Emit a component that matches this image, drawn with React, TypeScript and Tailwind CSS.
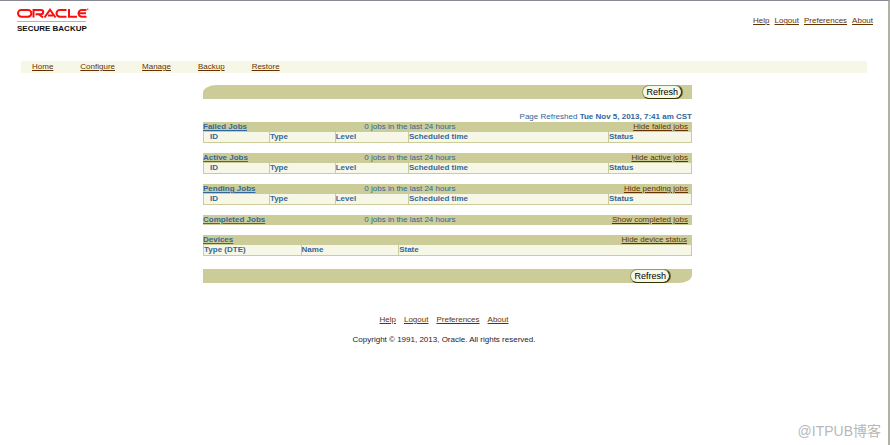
import type { ReactNode } from 'react';

const links = ['Help', 'Logout', 'Preferences', 'About'];
const menu = ['Home', 'Configure', 'Manage', 'Backup', 'Restore'];

type Job = { title: string; action: string; open: boolean };

const jobs: Job[] = [
  { title: 'Failed Jobs', action: 'Hide failed jobs', open: true },
  { title: 'Active Jobs', action: 'Hide active jobs', open: true },
  { title: 'Pending Jobs', action: 'Hide pending jobs', open: true },
  { title: 'Completed Jobs', action: 'Show completed jobs', open: false },
];

const jobColumns = [
  { name: 'ID', style: 'w-[13.5%] pl-1.5' },
  { name: 'Type', style: 'w-[13.5%]' },
  { name: 'Level', style: 'w-[15%]' },
  { name: 'Scheduled time', style: 'w-[41%]' },
  { name: 'Status', style: 'w-[17%]' },
];

const deviceColumns = [
  { name: 'Type (DTE)', style: 'w-[20%]' },
  { name: 'Name', style: 'w-[20%]' },
  { name: 'State', style: 'w-[60%]' },
];

const Logo = () => (
  <svg width="74" height="26" viewBox="0 0 74 26" role="img" aria-label="Oracle Secure Backup">
    <g fill="none" stroke="#fa0f0f" strokeWidth="2">
      <rect x="1" y="1.9" width="13.4" height="6.8" rx="3.4" />
      <path d="M16.5 9.5V1.9h7.5a2.2 2.2 0 0 1 0 4.4h-5.5M21.5 6l4.5 3.5" />
      <path d="M27.5 9.5l5.5-7.8 5.5 7.8M31 7.4h5" />
      <path d="M49.5 1.9h-6.6a3.4 3.4 0 0 0 0 6.8h6.6" />
      <path d="M52 1v7.7h8" />
      <path d="M69.5 1.9h-4.6a3.4 3.4 0 0 0 0 6.8h4.6M62.5 5.3h6.5" />
    </g>
    <circle cx="70.8" cy="1.2" r="0.7" fill="#fa0f0f" />
    <path d="M0 13.5h69" stroke="#b5b5b5" />
    <text x="0" y="23" fontSize="8" fontWeight="bold" fill="#111">SECURE BACKUP</text>
  </svg>
);

const Links = () => (
  <>
    {links.map((name) => (
      <a key={name} href="#" className="text-[#663300] underline">{name}</a>
    ))}
  </>
);

const RefreshButton = () => (
  <button
    type="button"
    className="h-3.5 rounded-full border border-[#999966] border-r-[#333300] border-b-[#333300] bg-[#f7f7e7] px-[3px] text-[9px] leading-none text-black shadow-[1px_0_0_#666633]"
  >
    Refresh
  </button>
);

const Bar = ({ title, note, children }: { title: string; note?: string; children: ReactNode }) => (
  <div className="flex h-[10px] items-center bg-[#cccc99]">
    <h2 className="w-[33%] font-bold">
      <a href="#" className="text-[#336699] underline">{title}</a>
    </h2>
    <span className="flex-1">{note}</span>
    {children}
  </div>
);

const Columns = ({ columns }: { columns: { name: string; style: string }[] }) => (
  <table className="w-full table-fixed border-collapse border border-t-0 border-[#cccc99] bg-[#f7f7e7]">
    <thead>
      <tr>
        {columns.map((column) => (
          <th key={column.name} className={`border-l border-[#cccc99] p-0 text-left font-bold ${column.style}`}>
            {column.name}
          </th>
        ))}
      </tr>
    </thead>
  </table>
);

export default function App() {
  return (
    <div className="relative min-h-screen border-t border-r-2 border-t-[#888a93] border-r-[#b0b2a4] bg-white font-['Liberation_Sans',Arial,sans-serif] text-[8px] leading-[10px] text-[#336699]">
      <header className="flex items-start justify-between pt-[7px] pr-[15px] pl-[17px]">
        <Logo />
        <div className="flex gap-[5px] pt-2">
          <Links />
        </div>
      </header>

      <nav className="mt-[27px] mr-[21px] ml-[21px] flex h-3 items-center gap-[27px] bg-[#f7f7e7] pl-[11px]">
        {menu.map((name) => (
          <a key={name} href="#" className="text-[#663300] underline">{name}</a>
        ))}
      </nav>

      <div className="pl-[7px]">
        <main className="mx-auto mt-3 w-[55.5%]">
          <div className="flex h-3.5 items-center justify-end rounded-tl-[14px_8px] bg-[#cccc99] pr-2.5">
            <RefreshButton />
          </div>

          <p className="mt-[13px] text-right">
            Page Refreshed <b>Tue Nov 5, 2013, 7:41 am CST</b>
          </p>

          <div className="flex flex-col gap-2.5">
            {jobs.map((job) => (
              <section key={job.title}>
                <Bar title={job.title} note="0 jobs in the last 24 hours">
                  <a href="#" className="pr-1 text-[#663300] underline">{job.action}</a>
                </Bar>
                {job.open && <Columns columns={jobColumns} />}
              </section>
            ))}
            <section>
              <Bar title="Devices">
                <a href="#" className="pr-[5px] text-[#663300] underline">Hide device status</a>
              </Bar>
              <Columns columns={deviceColumns} />
            </section>
          </div>

          <div className="mt-[13px] flex h-3.5 items-center justify-end rounded-br-[14px_8px] bg-[#cccc99] pr-[22px]">
            <RefreshButton />
          </div>
        </main>
      </div>

      <footer className="mt-8 text-center">
        <div className="flex justify-center gap-2">
          <Links />
        </div>
        <p className="mt-2.5 text-[#222233]">Copyright © 1991, 2013, Oracle. All rights reserved.</p>
      </footer>

      <div className="absolute right-[7px] bottom-1.5 font-['Liberation_Sans','Noto_Sans_CJK_SC',sans-serif] text-[14px] leading-4 text-[#b8b8b8]">
        @ITPUB博客
      </div>
    </div>
  );
}
